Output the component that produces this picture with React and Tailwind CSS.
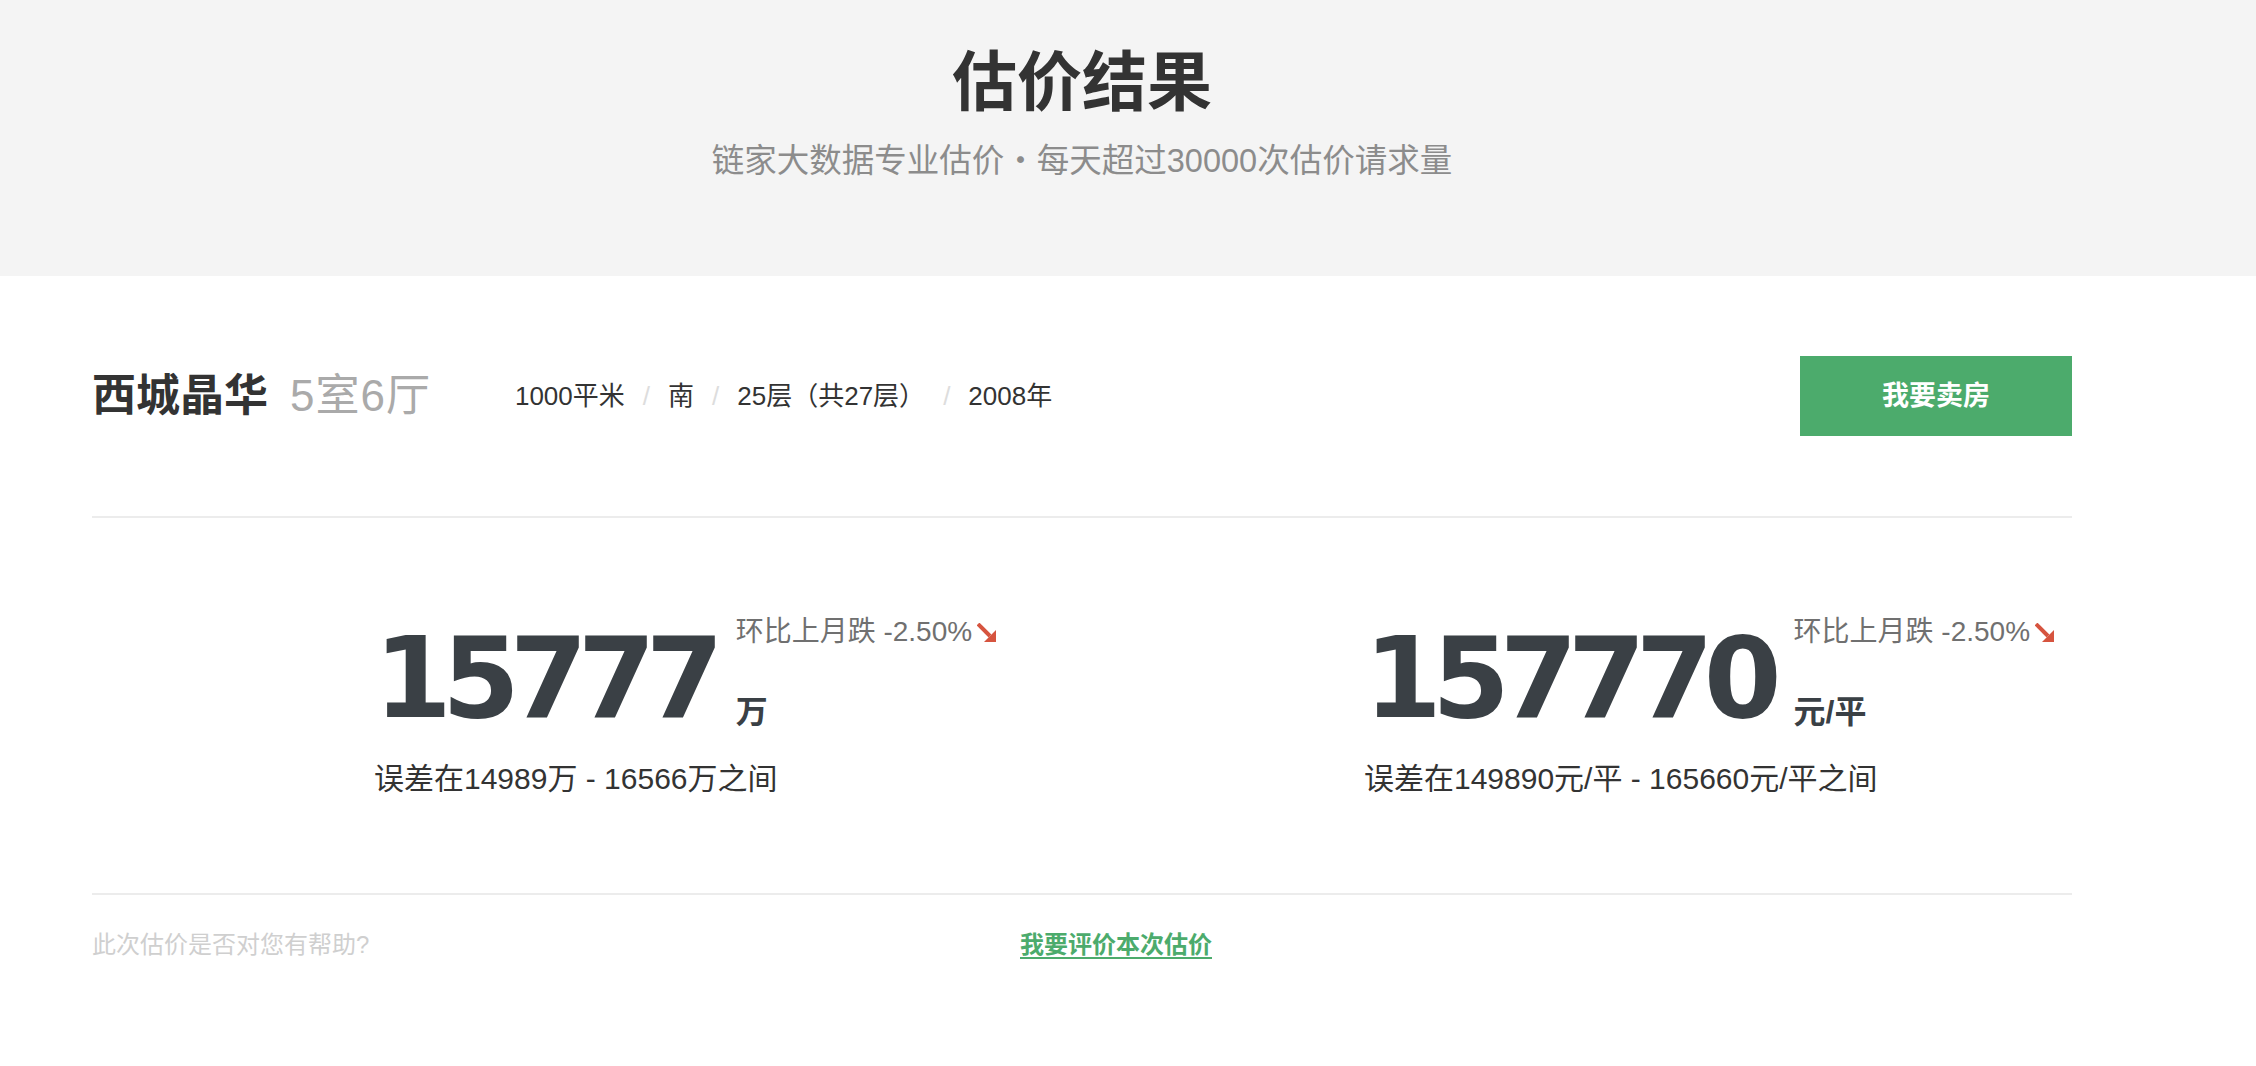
const sans = "font-['Liberation_Sans','Noto_Sans_CJK_SC',sans-serif]"

function DownArrow() {
  return (
    <svg width="20" height="20" viewBox="0 0 20 20" className="inline-block ml-[5px] mb-[2px]">
      <line x1="1" y1="1" x2="13" y2="13" stroke="#d6543f" strokeWidth="4" />
      <polygon points="19,7 19,19 7,19" fill="#d6543f" />
    </svg>
  )
}

function PriceBlock({ value, unit, range }) {
  return (
    <div className="pl-[282px]">
      <div className="flex">
        <span className="font-['DejaVu_Sans',sans-serif] font-bold text-[112px] leading-none tracking-[-10px] text-[#3a4045]">
          {value}
        </span>
        <div className="flex flex-col justify-between ml-[22px]">
          <div className="-mt-[4px] text-[28px] leading-none text-[#707070] whitespace-nowrap">
            环比上月跌 -2.50%
            <DownArrow />
          </div>
          <div className="text-[32px] font-bold leading-none text-[#3a4045] mb-[6px]">{unit}</div>
        </div>
      </div>
      <div className="mt-[30px] text-[30px] leading-none text-[#333]">{range}</div>
    </div>
  )
}

export default function App() {
  const meta = ['1000平米', '南', '25层（共27层）', '2008年']

  return (
    <div className={`min-h-[1066px] bg-white ${sans}`}>
      <div className="h-[276px] bg-[#f4f4f4]">
        <div className="ml-[92px] w-[1980px] pt-[50px] text-center">
          <h1 className="text-[65px] font-bold leading-none text-[#333]">估价结果</h1>
          <p className="mt-[30px] text-[32.5px] leading-none text-[#8c8c8c]">
            链家大数据专业估价・每天超过30000次估价请求量
          </p>
        </div>
      </div>

      <div className="ml-[92px] w-[1980px]">
        <div className="flex items-center pt-[80px] pb-[80px] border-b-2 border-[#ececec]">
          <span className="text-[44px] font-bold text-[#333]">西城晶华</span>
          <span className="ml-[22px] text-[44px] text-[#aaa] tracking-[1px]">5室6厅</span>
          <div className="flex items-center ml-[84px] text-[26px] text-[#333]">
            {meta.map((m, i) => (
              <div key={m} className="flex items-center">
                {i > 0 && <span className="px-[18px] text-[#ddd]">/</span>}
                <span>{m}</span>
              </div>
            ))}
          </div>
          <button className="ml-auto w-[272px] h-[80px] bg-[#4cab6c] text-white text-[27px] font-bold">
            我要卖房
          </button>
        </div>

        <div className="grid grid-cols-2 pt-[104px] pb-[99px] border-b-2 border-[#ececec]">
          <PriceBlock value="15777" unit="万" range="误差在14989万 - 16566万之间" />
          <PriceBlock value="157770" unit="元/平" range="误差在149890元/平 - 165660元/平之间" />
        </div>

        <div className="flex items-center pt-[32px] text-[24px]">
          <span className="w-[928px] text-[#cfcfcf]">此次估价是否对您有帮助?</span>
          <a href="#" className="font-bold text-[#4cab6c] underline underline-offset-4">我要评价本次估价</a>
        </div>
      </div>
    </div>
  )
}
